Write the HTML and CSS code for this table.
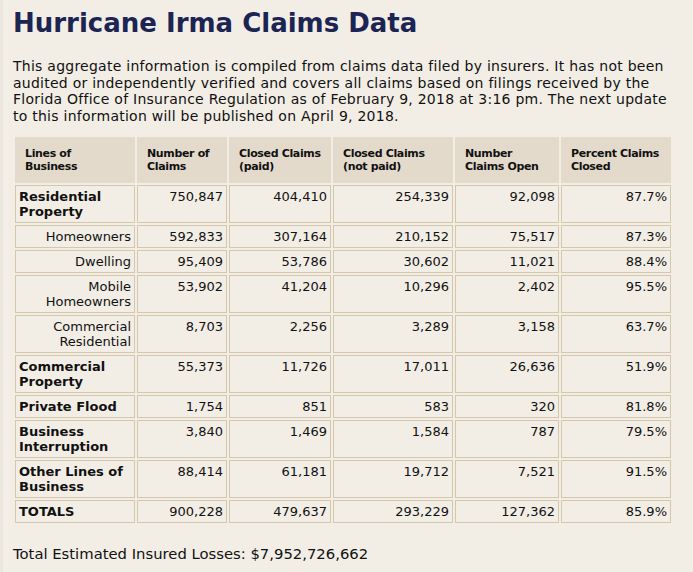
FILE: index.html
```html
<!DOCTYPE html>
<html lang="en">
<head>
<meta charset="utf-8">
<title>Hurricane Irma Claims Data</title>
<link rel="stylesheet" href="styles.css">
</head>
<body>
<main class="page">
  <h1 class="title">Hurricane Irma Claims Data</h1>
  <p class="intro">This aggregate information is compiled from claims data filed by insurers. It has not been<br>audited or independently verified and covers all claims based on filings received by the<br>Florida Office of Insurance Regulation as of February 9, 2018 at 3:16 pm. The next update<br>to this information will be published on April 9, 2018.</p>
  <table class="claims">
    <colgroup>
      <col class="c1"><col class="c2"><col class="c3"><col class="c4"><col class="c5"><col class="c6">
    </colgroup>
    <thead>
      <tr>
        <th>Lines of<br>Business</th>
        <th>Number of<br>Claims</th>
        <th>Closed Claims<br>(paid)</th>
        <th>Closed Claims<br>(not paid)</th>
        <th>Number<br>Claims Open</th>
        <th>Percent Claims<br>Closed</th>
      </tr>
    </thead>
    <tbody>
      <tr><td class="line main">Residential<br>Property</td><td>750,847</td><td>404,410</td><td>254,339</td><td>92,098</td><td>87.7%</td></tr>
      <tr><td class="line sub">Homeowners</td><td>592,833</td><td>307,164</td><td>210,152</td><td>75,517</td><td>87.3%</td></tr>
      <tr><td class="line sub">Dwelling</td><td>95,409</td><td>53,786</td><td>30,602</td><td>11,021</td><td>88.4%</td></tr>
      <tr><td class="line sub">Mobile<br>Homeowners</td><td>53,902</td><td>41,204</td><td>10,296</td><td>2,402</td><td>95.5%</td></tr>
      <tr><td class="line sub">Commercial<br>Residential</td><td>8,703</td><td>2,256</td><td>3,289</td><td>3,158</td><td>63.7%</td></tr>
      <tr><td class="line main">Commercial<br>Property</td><td>55,373</td><td>11,726</td><td>17,011</td><td>26,636</td><td>51.9%</td></tr>
      <tr><td class="line main">Private Flood</td><td>1,754</td><td>851</td><td>583</td><td>320</td><td>81.8%</td></tr>
      <tr><td class="line main">Business<br>Interruption</td><td>3,840</td><td>1,469</td><td>1,584</td><td>787</td><td>79.5%</td></tr>
      <tr><td class="line main">Other Lines of<br>Business</td><td>88,414</td><td>61,181</td><td>19,712</td><td>7,521</td><td>91.5%</td></tr>
      <tr><td class="line main">TOTALS</td><td>900,228</td><td>479,637</td><td>293,229</td><td>127,362</td><td>85.9%</td></tr>
    </tbody>
  </table>
  <p class="total">Total Estimated Insured Losses: $7,952,726,662</p>
</main>
</body>
</html>
```

FILE: styles.css
```css
html {
  background: #f2eee6;
}
body {
  margin: 0;
  font-family: "DejaVu Sans", Verdana, sans-serif;
  color: #111;
}
.page {
  padding: 7px 0 0 10px;
  border-left: 3px solid #ece7de;
  min-height: 565px;
}
.title {
  margin: 0;
  font-size: 26px;
  font-weight: bold;
  line-height: 32px;
  color: #1b2452;
}
.intro {
  margin: 19px 0 0 0;
  font-size: 14px;
  line-height: 16.7px;
  letter-spacing: 0.25px;
  white-space: nowrap;
}
.claims {
  margin-top: 10px;
  border-collapse: separate;
  border-spacing: 2px;
  table-layout: fixed;
  width: 660px;
}
.c1 { width: 120px; }
.c2 { width: 90px; }
.c3 { width: 102px; }
.c4 { width: 120px; }
.c5 { width: 104px; }
.c6 { width: 110px; }
.claims th {
  background: #e3dacb;
  font-size: 11px;
  line-height: 13px;
  font-weight: bold;
  letter-spacing: -0.35px;
  text-align: left;
  vertical-align: top;
  white-space: nowrap;
  padding: 10px 8px 10px 10px;
}
.claims td {
  border: 1px solid #d5c7ad;
  font-size: 13px;
  line-height: 15px;
  padding: 3px;
  text-align: right;
  vertical-align: top;
  white-space: nowrap;
}
.claims td.main {
  text-align: left;
  font-weight: bold;
}
.claims td.sub {
  text-align: right;
}
.total {
  margin: 20px 0 0 0;
  font-size: 14.8px;
  line-height: 18px;
}
```
